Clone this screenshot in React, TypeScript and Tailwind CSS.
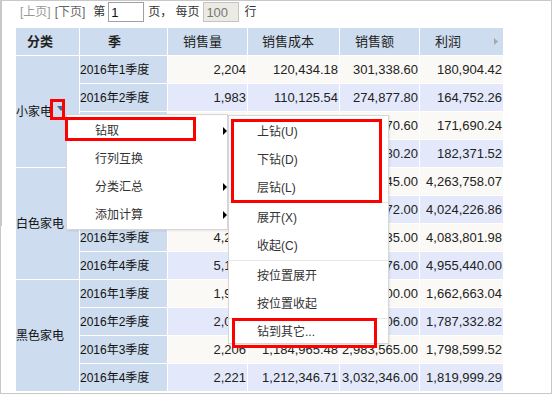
import React from "react";

const FONT = "font-['Liberation_Sans','Noto_Sans_CJK_SC',sans-serif]";

type Row = { q: string; v: string; c: string; s: string; p: string };
type Group = { name: string; rows: Row[]; dropdown?: boolean };

const groups: Group[] = [
  {
    name: "小家电",
    dropdown: true,
    rows: [
      { q: "2016年1季度", v: "2,204", c: "120,434.18", s: "301,338.60", p: "180,904.42" },
      { q: "2016年2季度", v: "1,983", c: "110,125.54", s: "274,877.80", p: "164,752.26" },
      { q: "2016年3季度", v: "2,091", c: "114,580.36", s: "286,270.60", p: "171,690.24" },
      { q: "2016年4季度", v: "2,215", c: "121,608.68", s: "303,980.20", p: "182,371.52" },
    ],
  },
  {
    name: "白色家电",
    rows: [
      { q: "2016年1季度", v: "5,012", c: "2,968,186.93", s: "7,231,945.00", p: "4,263,758.07" },
      { q: "2016年2季度", v: "4,731", c: "2,788,345.14", s: "6,812,572.00", p: "4,024,226.86" },
      { q: "2016年3季度", v: "4,276", c: "2,834,533.02", s: "6,918,335.00", p: "4,083,801.98" },
      { q: "2016年4季度", v: "5,179", c: "3,437,036.00", s: "8,392,476.00", p: "4,955,440.00" },
    ],
  },
  {
    name: "黑色家电",
    rows: [
      { q: "2016年1季度", v: "1,946", c: "1,102,436.96", s: "2,765,100.00", p: "1,662,663.04" },
      { q: "2016年2季度", v: "2,058", c: "1,183,973.18", s: "2,971,306.00", p: "1,787,332.82" },
      { q: "2016年3季度", v: "2,206", c: "1,184,965.48", s: "2,983,565.00", p: "1,798,599.52" },
      { q: "2016年4季度", v: "2,221", c: "1,212,346.71", s: "3,032,346.00", p: "1,819,999.29" },
    ],
  },
];

function Arrow() {
  return (
    <svg width="4" height="8" viewBox="0 0 4 8" className="shrink-0">
      <polygon points="0,0 4,4 0,8" fill="#000" />
    </svg>
  );
}

function NumCell({ text, odd }: { text: string; odd: boolean }) {
  return (
    <div
      className={`h-[27px] flex items-center justify-end pr-px text-[13px] whitespace-nowrap ${
        odd ? "bg-[#faf9f5]" : "bg-[#e3e9fb]"
      }`}
    >
      {text}
    </div>
  );
}

function MenuItem({ label, arrow, h = "h-[28px]" }: { label: string; arrow?: boolean; h?: string }) {
  return (
    <div className={`${h} flex items-center justify-between pl-[28px] text-[12px] text-[#333]`}>
      <span>{label}</span>
      {arrow ? <Arrow /> : null}
    </div>
  );
}

function Sep() {
  return <div className="h-px bg-[#e6e6e6] mb-px" />;
}

export default function App() {
  return (
    <div
      className={`relative w-[552px] h-[394px] border border-[#c8c8c8] bg-white overflow-hidden flex text-[#222] ${FONT}`}
    >
      <div className="w-px shrink-0">
        <div className="h-[225px] bg-[#c8c8c8]" />
      </div>
      <div className="flex-1 pl-[14px]">
        {/* toolbar */}
        <div className="h-[27px] pt-px pl-[4px]">
          <div className="h-[20px] flex items-center text-[12px]">
            <span className="text-[#999]">[上页]</span>
            <span className="ml-[4px] text-[#666]">[下页]</span>
            <span className="ml-[8px] text-[#333]">第</span>
            <input
              readOnly
              value="1"
              className="ml-[3px] w-[36px] h-[20px] border border-[#a0a0a0] px-[2px] text-[13px] outline-none bg-white text-[#111]"
            />
            <span className="ml-[4px] text-[#333]">页，</span>
            <span className="ml-[3px] text-[#333]">每页</span>
            <input
              readOnly
              value="100"
              className="ml-[4px] w-[36px] h-[20px] border border-[#c4c4c4] px-[2px] text-[13px] outline-none bg-[#ebebe4] text-[#777]"
            />
            <span className="ml-[5px] text-[#333]">行</span>
          </div>
        </div>

        {/* table */}
        <div className="grid grid-cols-[63px_87px_79px_91px_79px_83px] gap-px bg-white w-max">
          <div className="h-[27px] bg-[#cddcee] flex items-center pl-[11px] text-[13px] font-bold text-[#222]">分类</div>
          <div className="h-[27px] bg-[#cddcee] flex items-center pl-[28px] text-[13px] font-bold text-[#222]">季</div>
          <div className="h-[27px] bg-[#cddcee] flex items-center pl-[15px] text-[13px] text-[#222]">销售量</div>
          <div className="h-[27px] bg-[#cddcee] flex items-center pl-[14px] text-[13px] text-[#222]">销售成本</div>
          <div className="h-[27px] bg-[#cddcee] flex items-center pl-[15px] text-[13px] text-[#222]">销售额</div>
          <div className="h-[27px] bg-[#cddcee] flex items-center justify-between pl-[15px] pr-[5px] text-[13px] text-[#222]">
            <span>利润</span>
            <svg width="4" height="7" viewBox="0 0 4 7">
              <polygon points="0,0 4,3.5 0,7" fill="#a8a8a8" />
            </svg>
          </div>

          {groups.map((g) => (
            <React.Fragment key={g.name}>
              <div className="row-span-4 bg-[#cddcee] flex items-center text-[12px] text-[#111]">
                <span>{g.name}</span>
                {g.dropdown ? (
                  <svg width="8" height="5" viewBox="0 0 8 5" className="ml-[5px] mb-[6px]">
                    <polygon points="0,0 8,0 4,5" fill="#4b6a8c" />
                  </svg>
                ) : null}
              </div>
              {g.rows.map((r, i) => (
                <React.Fragment key={r.q}>
                  <div className="h-[27px] bg-[#cddcee] flex items-center text-[12px] text-[#111] whitespace-nowrap">{r.q}</div>
                  <NumCell text={r.v} odd={i % 2 === 0} />
                  <NumCell text={r.c} odd={i % 2 === 0} />
                  <NumCell text={r.s} odd={i % 2 === 0} />
                  <NumCell text={r.p} odd={i % 2 === 0} />
                </React.Fragment>
              ))}
            </React.Fragment>
          ))}
        </div>
      </div>

      {/* context menu */}
      <div className="absolute left-[65px] top-[113px] w-[162px] h-[116px] border border-[#d6d6d6] bg-white pt-[2px] shadow-[1px_1px_2px_rgba(0,0,0,0.08)]">
        <MenuItem label="钻取" arrow />
        <MenuItem label="行列互换" />
        <MenuItem label="分类汇总" arrow />
        <MenuItem label="添加计算" arrow />
      </div>

      {/* submenu */}
      <div className="absolute left-[227px] top-[114px] w-[161px] h-[229px] border border-[#d6d6d6] bg-white pt-[2px] overflow-hidden shadow-[1px_1px_2px_rgba(0,0,0,0.08)]">
        <MenuItem label="上钻(U)" />
        <MenuItem label="下钻(D)" />
        <MenuItem label="层钻(L)" />
        <Sep />
        <MenuItem label="展开(X)" />
        <MenuItem label="收起(C)" />
        <Sep />
        <MenuItem label="按位置展开" />
        <MenuItem label="按位置收起" />
        <Sep />
        <MenuItem label="钻到其它..." h="h-[24px]" />
      </div>

      {/* red highlight boxes */}
      <div className="absolute left-[49px] top-[98px] w-[15px] h-[21px] border-[3px] border-[#ff0000]" />
      <div className="absolute left-[64px] top-[116px] w-[131px] h-[24px] border-[3px] border-[#ff0000]" />
      <div className="absolute left-[230px] top-[118px] w-[151px] h-[84px] border-[3px] border-[#ff0000]" />
      <div className="absolute left-[231px] top-[317px] w-[145px] h-[30px] border-[3px] border-[#ff0000]" />
    </div>
  );
}
